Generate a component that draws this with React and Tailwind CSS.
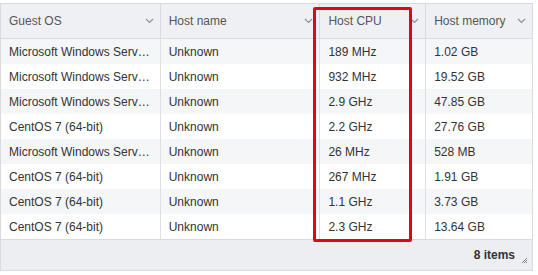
import React from "react";

const rows = [
  ["Microsoft Windows Serv…", "Unknown", "189 MHz", "1.02 GB"],
  ["Microsoft Windows Serv…", "Unknown", "932 MHz", "19.52 GB"],
  ["Microsoft Windows Serv…", "Unknown", "2.9 GHz", "47.85 GB"],
  ["CentOS 7 (64-bit)", "Unknown", "2.2 GHz", "27.76 GB"],
  ["Microsoft Windows Serv…", "Unknown", "26 MHz", "528 MB"],
  ["CentOS 7 (64-bit)", "Unknown", "267 MHz", "1.91 GB"],
  ["CentOS 7 (64-bit)", "Unknown", "1.1 GHz", "3.73 GB"],
  ["CentOS 7 (64-bit)", "Unknown", "2.3 GHz", "13.64 GB"],
];

const cols = [
  { name: "Guest OS", w: "w-[160px]" },
  { name: "Host name", w: "w-[160px]" },
  { name: "Host CPU", w: "w-[106px]" },
  { name: "Host memory", w: "w-[106px]" },
];

function Chevron() {
  return (
    <svg width="9" height="6" viewBox="0 0 9 6" className="shrink-0">
      <path d="M1 1 L4.5 4.5 L8 1" fill="none" stroke="#8a8f96" strokeWidth="1.1" />
    </svg>
  );
}

export default function App() {
  return (
    <div className="w-[538px] h-[275px] bg-white pt-[3px] relative" style={{ fontFamily: '"Liberation Sans", Arial, sans-serif' }}>
      <div className="w-[533px] border border-[#d7dadf] text-[12px]">
        <div className="flex h-[35px] bg-[#eef0f3] border-b border-[#d7dadf] text-[#565656]">
          {cols.map((c, i) => (
            <div key={i} className={`${c.w} flex items-center justify-between pl-[8px] pr-[6px] ${i < 3 ? "border-r border-[#d7dadf]" : ""}`}>
              <span className="whitespace-nowrap">{c.name}</span>
              <Chevron />
            </div>
          ))}
        </div>
        {rows.map((r, ri) => (
          <div key={ri} className={`flex h-[25px] text-[#333] ${ri % 2 === 0 ? "bg-[#f5f6f8]" : "bg-white"}`}>
            {r.map((v, ci) => (
              <div key={ci} className={`${cols[ci].w} flex items-center pl-[8px] pr-[4px] ${ci < 3 ? "border-r border-[#dcdfe3]" : ""}`}>
                <span className="whitespace-nowrap">{v}</span>
              </div>
            ))}
          </div>
        ))}
        <div className="h-[31px] bg-[#eceef1] border-t border-[#d7dadf] flex items-center justify-end pr-[17px] relative">
          <span className="font-bold text-[#333]">8 items</span>
          <svg width="7" height="7" viewBox="0 0 7 7" className="absolute right-[4px] bottom-[6px]">
            <path d="M6 1 L1 6 M6 3 L3 6 M6 5 L5 6" stroke="#777" strokeWidth="0.9" />
          </svg>
        </div>
      </div>
      <div className="absolute left-[313px] top-[7px] w-[99px] h-[235px] border-[3px] border-[#e00712] rounded-[2px]" />
    </div>
  );
}
